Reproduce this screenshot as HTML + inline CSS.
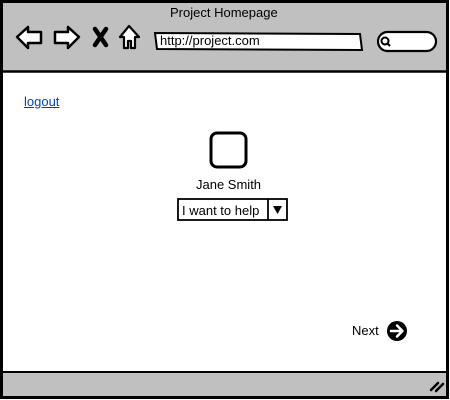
<!DOCTYPE html>
<html><head><meta charset="utf-8"><style>
html,body{margin:0;padding:0;background:#fff;}
body{width:450px;height:400px;position:relative;overflow:hidden;font-family:"Liberation Sans",sans-serif;}
svg{position:absolute;left:0;top:0;}
.t{position:absolute;font-size:13px;color:#000;white-space:nowrap;}
</style></head><body>
<svg width="450" height="400" viewBox="0 0 450 400">
<rect x="1.5" y="1.5" width="446" height="396" fill="#fff" stroke="#000" stroke-width="3"/>
<rect x="3" y="3" width="443" height="68" fill="#c0c0c0"/>
<line x1="2" y1="71.5" x2="447" y2="71.5" stroke="#000" stroke-width="2.5"/>
<rect x="3" y="373" width="443" height="23" fill="#c0c0c0"/>
<line x1="2" y1="372" x2="447" y2="372" stroke="#000" stroke-width="2"/>
<!-- back arrow -->
<path d="M17 37 L28 27 L28 32 L41 32 L41 43 L28 43 L28 48 Z" fill="#fff" stroke="#000" stroke-width="2.5" stroke-linejoin="round"/>
<!-- forward arrow -->
<path d="M79 37 L68 27 L68 32 L55 32 L55 43 L68 43 L68 48 Z" fill="#fff" stroke="#000" stroke-width="2.5" stroke-linejoin="round"/>
<!-- X -->
<path d="M95 29 L106 45 M106 29 L95 45" stroke="#000" stroke-width="4.5" stroke-linecap="round"/>
<!-- home -->
<path d="M129 26 L120 37 L124 37 L124 48 L128 48 L128 41 L131 41 L131 48 L135 48 L135 37 L139 37 Z" fill="#fff" stroke="#000" stroke-width="2.2" stroke-linejoin="round"/>
<!-- url bar -->
<path d="M155 33 L360 34 L362 50 L157 49 Z" fill="#fff" stroke="#000" stroke-width="2"/>
<!-- search -->
<rect x="378" y="32" width="58" height="19" rx="9.5" fill="#fff" stroke="#000" stroke-width="2.2"/>
<circle cx="385" cy="41" r="3.5" fill="none" stroke="#000" stroke-width="2"/>
<line x1="387.5" y1="43.5" x2="390" y2="46" stroke="#000" stroke-width="2"/>
<!-- avatar box -->
<rect x="211" y="133" width="35" height="34" rx="6" fill="#fff" stroke="#000" stroke-width="3"/>
<!-- dropdown -->
<rect x="178" y="199" width="109" height="21" fill="#fff" stroke="#000" stroke-width="1.8"/>
<line x1="268" y1="199" x2="268" y2="220" stroke="#000" stroke-width="1.8"/>
<path d="M273 206 L282 206 L277.5 214 Z" fill="#000"/>
<!-- next circle -->
<circle cx="397" cy="331" r="10" fill="#000"/>
<path d="M391 331 L402 331 M397 325.5 L402.5 331 L397 336.5" stroke="#fff" stroke-width="2.5" fill="none" stroke-linecap="round" stroke-linejoin="round"/>
<!-- resize -->
<path d="M431 390 L438 383 M436 391 L443 384" stroke="#000" stroke-width="2.5" stroke-linecap="round"/>
</svg>
<div class="t" style="left:170px;top:5px;">Project Homepage</div>
<div class="t" style="left:160px;top:33px;">http://project.com</div>
<div class="t" style="left:24px;top:94px;color:#0645ad;text-decoration:underline;">logout</div>
<div class="t" style="left:196px;top:177px;">Jane Smith</div>
<div class="t" style="left:182px;top:203px;">I want to help</div>
<div class="t" style="left:352px;top:323px;">Next</div>
</body></html>
